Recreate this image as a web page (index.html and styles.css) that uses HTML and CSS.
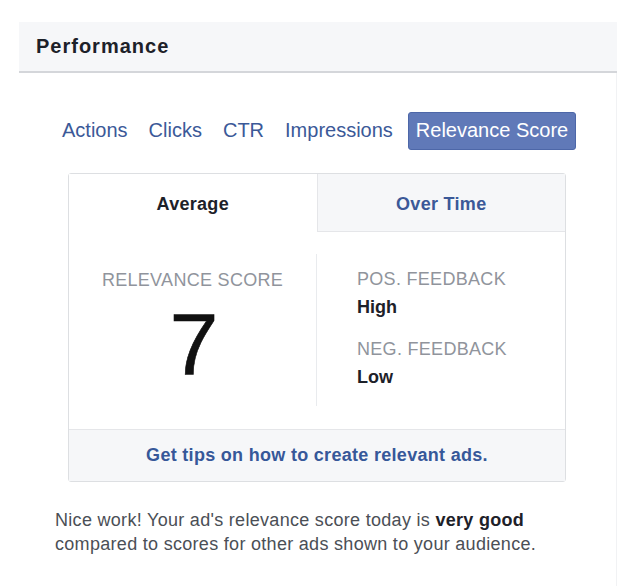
FILE: index.html
```html
<!DOCTYPE html>
<html lang="en">
<head>
  <meta charset="UTF-8">
  <meta name="viewport" content="width=device-width, initial-scale=1.0">
  <title>Performance</title>
  <link rel="stylesheet" href="styles.css">
</head>
<body>
  <div class="panel">
    <header class="panel-header">
      <h1>Performance</h1>
    </header>

    <div class="panel-body">
      <nav class="metric-tabs">
        <a class="metric-tab">Actions</a>
        <a class="metric-tab">Clicks</a>
        <a class="metric-tab">CTR</a>
        <a class="metric-tab">Impressions</a>
        <a class="metric-tab active">Relevance Score</a>
      </nav>

      <div class="score-card">
        <div class="card-tabs">
          <div class="card-tab active">Average</div>
          <div class="card-tab">Over Time</div>
        </div>

        <div class="card-body">
          <div class="score-col">
            <div class="label">RELEVANCE SCORE</div>
            <div class="score">7</div>
          </div>
          <div class="feedback-col">
            <div class="label">POS. FEEDBACK</div>
            <div class="value">High</div>
            <div class="label">NEG. FEEDBACK</div>
            <div class="value">Low</div>
          </div>
        </div>

        <div class="card-footer">
          <a>Get tips on how to create relevant ads.</a>
        </div>
      </div>

      <p class="summary">Nice work! Your ad's relevance score today is <b>very good</b> compared to scores for other ads shown to your audience.</p>
    </div>
  </div>
</body>
</html>
```

FILE: styles.css
```css
body {
  font-family: "Liberation Sans", Arial, sans-serif;
  margin: 0;
  padding: 0;
  background-color: #fff;
  color: #1d2129;
}
.panel {
  width: 598px;
  margin: 22px 0 0 19px;
}
.panel-header {
  height: 49px;
  padding-left: 17px;
  background-color: #f6f7f9;
  border-bottom: 2px solid #d4d6da;
  display: flex;
  align-items: center;
}
.panel-header h1 {
  margin: 0;
  font-size: 20px;
  letter-spacing: 1px;
  color: #1d2129;
}
.panel-body {
  min-height: 480px;
  padding: 39px 0 0 35px;
  border-right: 1px solid #f1f2f4;
}
.metric-tabs {
  display: flex;
  gap: 5px;
}
.metric-tab {
  padding: 5px 7px 7px;
  border: 1px solid transparent;
  border-radius: 3px;
  font-size: 20px;
  line-height: 24px;
  color: #3b5998;
}
.metric-tab.active {
  margin-left: 2px;
  background-color: #6079b8;
  border-color: #4d67a8;
  color: #fff;
}
.score-card {
  width: 496px;
  margin: 23px 0 0 14px;
  border: 1px solid #dddfe2;
  border-radius: 3px;
}
.card-tabs {
  display: flex;
  height: 58px;
}
.card-tab {
  flex: 1;
  display: flex;
  align-items: center;
  justify-content: center;
  padding-top: 3px;
  font-size: 18px;
  font-weight: bold;
  letter-spacing: 0.3px;
  color: #3b5998;
  background-color: #f6f7f9;
  border-left: 1px solid #e5e6e9;
  border-bottom: 1px solid #e5e6e9;
}
.card-tab.active {
  background-color: #fff;
  color: #1d2129;
  border: none;
}
.card-body {
  display: flex;
  padding: 22px 0 23px;
}
.score-col {
  width: 247px;
  padding-top: 15px;
  text-align: center;
  border-right: 1px solid #e9ebee;
}
.feedback-col {
  flex: 1;
  height: 138px;
  padding: 14px 0 0 40px;
}
.label {
  font-size: 18px;
  line-height: 22px;
  letter-spacing: 0.3px;
  color: #90949c;
}
.score {
  margin-top: 10px;
  margin-left: 3px;
  font-size: 88px;
  line-height: 88px;
  color: #111;
  -webkit-text-stroke: 0.6px #111;
}
.value {
  margin: 6px 0 20px;
  font-size: 18px;
  line-height: 22px;
  font-weight: bold;
  color: #1d2129;
}
.card-footer {
  height: 51px;
  display: flex;
  align-items: center;
  justify-content: center;
  background-color: #f6f7f9;
  border-top: 1px solid #e5e6e9;
}
.card-footer a {
  font-size: 18px;
  font-weight: bold;
  letter-spacing: 0.3px;
  color: #365899;
}
.summary {
  max-width: 490px;
  margin: 26px 0 0 1px;
  font-size: 18px;
  line-height: 24px;
  letter-spacing: 0.3px;
  color: #4b4f56;
}
.summary b {
  color: #1d2129;
}
```
